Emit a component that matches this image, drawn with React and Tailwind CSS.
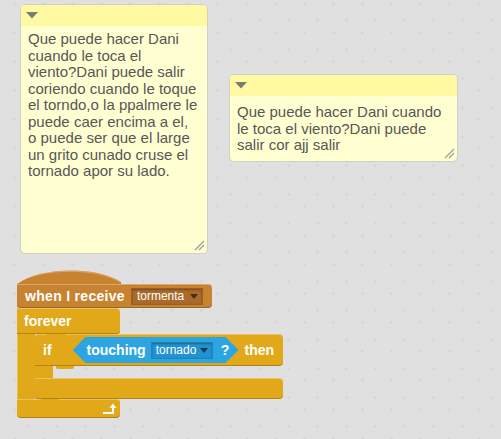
import React from 'react';

const font = { fontFamily: '"Liberation Sans", Arial, sans-serif' };

const noteOne = [
  'Que puede hacer Dani',
  'cuando le toca el',
  'viento?Dani puede salir',
  'coriendo cuando le toque',
  'el torndo,o la ppalmere le',
  'puede caer encima a el,',
  'o puede ser que el large',
  'un grito cunado cruse el',
  'tornado apor su lado.',
];

const noteTwo = ['Que puede hacer Dani cuando', 'le toca el viento?Dani puede', 'salir cor ajj salir'];

const Note = ({ className, padTop, lines }) => (
  <div className={`absolute flex flex-col overflow-hidden rounded-[5px] border border-[#d0d0c4] bg-[#ffffd2] ${className}`}>
    <div className="flex h-[21px] shrink-0 items-center bg-[#fffaa2] pl-[5px]">
      <svg width="12" height="7" viewBox="0 0 12 7">
        <path d="M0 0 H12 L6 6.5 Z" fill="#7a7a7a" />
      </svg>
    </div>
    <div className={`flex-1 px-[7px] ${padTop} text-[15px] leading-[16.5px] text-[#575757]`}>
      {lines.map((l, i) => (
        <div key={i} className="whitespace-nowrap">{l}</div>
      ))}
    </div>
    <svg className="absolute bottom-[2px] right-[2px]" width="11" height="11" viewBox="0 0 11 11">
      <path d="M1 10 L10 1 M5 10 L10 5" stroke="#9a9a9a" strokeWidth="1.2" />
    </svg>
  </div>
);

const bevel = 'shadow-[inset_0_1px_0_rgba(255,255,255,0.3),inset_0_-1px_0_rgba(0,0,0,0.22)]';

const Script = () => (
  <div className="absolute left-[17px] top-[269px] flex flex-col font-bold text-white text-[14px]" style={font}>
    {/* hat cap */}
    <svg width="195" height="15" viewBox="0 0 195 15" className="block">
      <path d="M0 15 C 22 -2 80 -3 104 13 L 104 15 Z" fill="#c88330" />
      <path d="M1 14 C 22 -1 80 -2 103 13" fill="none" stroke="rgba(255,255,255,0.3)" strokeWidth="1" />
    </svg>
    {/* hat body */}
    <div className={`relative z-10 flex h-[24px] w-[195px] items-center rounded-r-[4px] rounded-bl-[3px] bg-[#c88330] pl-[8px] ${bevel}`}>
      <span className="tracking-[0.3px]">when I receive</span>
      <div className="ml-[6px] flex h-[17px] w-[72px] items-center justify-between border border-[#9a5f22] bg-[#a96a2a] pl-[5px] pr-[4px] text-[12px] font-normal shadow-[inset_0_1px_2px_rgba(0,0,0,0.3)]">
        <span>tormenta</span>
        <svg width="8" height="5" viewBox="0 0 8 5"><path d="M0 0 H8 L4 5 Z" fill="#4a2c12" /></svg>
      </div>
      <div className="absolute -bottom-[3px] left-[12px] h-[3px] w-[18px] rounded-b-[2px] bg-[#c88330]" />
    </div>
    {/* forever top arm */}
    <div className={`relative z-10 flex h-[26px] w-[103px] items-center rounded-tr-[4px] rounded-br-[3px] bg-[#e1a91a] pl-[7px] ${bevel}`}>
      <span>forever</span>
      <div className="absolute -bottom-[3px] left-[30px] h-[3px] w-[18px] rounded-b-[2px] bg-[#e1a91a]" />
    </div>
    {/* forever body */}
    <div className="flex">
      <div className="w-[18px] bg-[#e1a91a] shadow-[inset_1px_0_0_rgba(255,255,255,0.25)]" />
      <div className="flex flex-col">
        {/* if top arm */}
        <div className={`relative flex h-[32px] w-[248px] items-center rounded-r-[4px] rounded-tl-[3px] bg-[#e1a91a] pl-[8px] ${bevel}`}>
          <span>if</span>
          <div className="ml-[21px] flex h-[26px] w-[166px] items-center bg-[#2ca5e2] pl-[14px] [clip-path:polygon(13px_0,calc(100%-13px)_0,100%_50%,calc(100%-13px)_100%,13px_100%,0_50%)]">
            <span>touching</span>
            <div className="ml-[5px] flex h-[17px] w-[62px] items-center justify-between border border-[#1c84bd] bg-[#2392cf] pl-[4px] pr-[4px] text-[12px] font-normal shadow-[inset_0_1px_2px_rgba(0,0,0,0.3)]">
              <span>tornado</span>
              <svg width="8" height="5" viewBox="0 0 8 5"><path d="M0 0 H8 L4 5 Z" fill="#0f3b57" /></svg>
            </div>
            <span className="ml-[8px]">?</span>
          </div>
          <span className="ml-[6px]">then</span>
          <div className="absolute -bottom-[3px] left-[21px] z-10 h-[3px] w-[18px] rounded-b-[2px] bg-[#e1a91a]" />
        </div>
        {/* if middle */}
        <div className="flex h-[12px]">
          <div className="w-[18px] bg-[#e1a91a]" />
        </div>
        {/* if bottom arm */}
        <div className={`relative h-[21px] w-[248px] rounded-r-[4px] rounded-bl-[3px] bg-[#e1a91a] ${bevel}`}>
          <div className="absolute -bottom-[3px] left-[6px] h-[3px] w-[18px] rounded-b-[2px] bg-[#e1a91a]" />
        </div>
      </div>
    </div>
    {/* forever bottom arm */}
    <div className={`flex h-[19px] w-[103px] items-center rounded-b-[4px] rounded-tr-[3px] bg-[#e1a91a] pl-[85px] ${bevel}`}>
      <svg width="15" height="13" viewBox="0 0 15 13">
        <path d="M1 11 H11 V5" fill="none" stroke="#ffffff" strokeWidth="2" />
        <path d="M7.5 6 L11 1.5 L14.5 6 Z" fill="#ffffff" />
      </svg>
    </div>
  </div>
);

export default function App() {
  return (
    <div
      className="relative h-[439px] w-[501px] overflow-hidden bg-[#e0e0e0] [background-image:radial-gradient(circle,#d6d6d6_1px,transparent_1.6px),radial-gradient(circle,#d6d6d6_1px,transparent_1.6px)] [background-size:29px_29px] [background-position:0px_-11px,13px_6px]"
      style={font}
    >
      <Note className="left-[20px] top-[4px] h-[250px] w-[188px]" padTop="pt-[5px]" lines={noteOne} />
      <Note className="left-[229px] top-[74px] h-[88px] w-[229px]" padTop="pt-[8px]" lines={noteTwo} />
      <Script />
    </div>
  );
}
